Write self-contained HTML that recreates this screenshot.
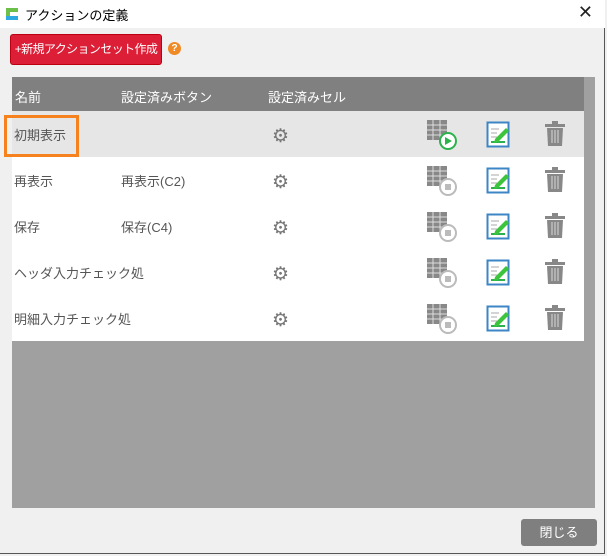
<!DOCTYPE html>
<html><head><meta charset="utf-8"><style>
*{margin:0;padding:0;box-sizing:border-box}
body{width:607px;height:556px;background:#f0f0f0;font-family:"Liberation Sans","Noto Sans CJK JP",sans-serif;position:relative;overflow:hidden}
.win{position:absolute;left:0;top:0;width:605px;height:554px;border-right:1px solid #555;border-bottom:1px solid #555}
.title{position:absolute;left:0;top:0;width:605px;height:28px;background:#fff;font-size:13px;color:#000}
.title span{position:absolute;left:25px;top:5px}
.x{position:absolute;right:12px;top:2px;font-size:18px;color:#222}
.newbtn{position:absolute;left:10px;top:34px;width:152px;height:31px;background:#dc1f37;border:1px solid #b01;border-radius:3px;color:#fff;font-size:12px;letter-spacing:-0.6px;line-height:29px;text-align:center;white-space:nowrap}
.help{position:absolute;left:168px;top:42px;width:13px;height:13px;border-radius:50%;background:#f08a24;color:#fff;font-size:10px;font-weight:bold;text-align:center;line-height:13px}
.panel{position:absolute;left:12px;top:77px;width:583px;height:431px;background:#a0a0a0}
.hdr{position:absolute;left:0;top:0;width:572px;height:34px;background:#808080;color:#fff;font-size:13px}
.hdr span{position:absolute;top:10px}
.row{position:absolute;left:0;width:572px;height:46px;background:#fff;font-size:13px;color:#555}
.row span{position:absolute;top:14px}
.gear{position:absolute;left:260px;top:12px;font-size:19px;color:#777}
.ic{position:absolute;top:8px}
.close{position:absolute;left:521px;top:519px;width:76px;height:27px;background:#7f7f7f;border-radius:3px;color:#fff;font-size:13px;text-align:center;line-height:27px}
.sel{position:absolute;left:4px;top:115px;width:75px;height:42px;border:3px solid #f5821f;z-index:5}
</style></head><body>
<div class="win">
<div class="title">
<svg style="position:absolute;left:5px;top:7px" width="14" height="14"><path d="M1 1h12v4H5v4h8v4H1z" fill="#2da8e0"/><path d="M1 1h12v4H5v4H1z" fill="#6cc04a"/><path d="M1 9h4v4H1z" fill="#2da8e0"/></svg>
<span>アクションの定義</span><div class="x">✕</div></div>
<div class="newbtn">+新規アクションセット作成</div>
<div class="help">?</div>
<div class="panel">
<div class="hdr"><span style="left:3px">名前</span><span style="left:109px">設定済みボタン</span><span style="left:256px">設定済みセル</span></div>
</div>
</div>
<div id="rows" style="position:absolute;left:12px;top:111px">
<div class="row" style="top:0;background:#e6e6e6"><span style="left:2px">初期表示</span><span class="gear">⚙</span>
<svg class="ic" style="left:415px" width="30" height="32"><rect x="0" y="1" width="20" height="20" fill="#888"/><path d="M0 6h20M0 11h20M0 16h20M6 1v20M13 1v20" stroke="#ddd"/><circle cx="21" cy="22" r="8" fill="#fff" stroke="#2bb24c" stroke-width="2"/><path d="M18 18l7 4-7 4z" fill="#2bb24c"/></svg>
<svg class="ic" style="left:474px" width="26" height="30"><rect x="1.5" y="3.5" width="21" height="24" fill="#fff" stroke="#3d86c6" stroke-width="2"/><path d="M5 10h8M5 14h6M5 18h6" stroke="#aaa"/><path d="M5 23h14" stroke="#2bb24c" stroke-width="2"/><path d="M9 20l11-11 3 3-11 11-4 1z" fill="#3cc43c"/></svg>
<svg class="ic" style="left:532px" width="22" height="28"><path d="M1 5h20v3H1zM8 2h6v3H8z" fill="#888"/><path d="M3 9h16l-1 18H4z" fill="#888"/><path d="M8 11v13M11 11v13M14 11v13" stroke="#ccc" stroke-width="1.2"/></svg></div>
</div>
<div class="sel"></div>
<div class="close">閉じる</div>
<script>
var d=[["再表示","再表示(C2)"],["保存","保存(C4)"],["ヘッダ入力チェック処",""],["明細入力チェック処",""]];
var h="";d.forEach(function(r,i){h+='<div class="row" style="top:'+(46*(i+1))+'px"><span style="left:2px">'+r[0]+'</span><span style="left:109px">'+r[1]+'</span><span class="gear">⚙</span>'+
'<svg class="ic" style="left:415px" width="30" height="32"><rect x="0" y="1" width="20" height="20" fill="#888"/><path d="M0 6h20M0 11h20M0 16h20M6 1v20M13 1v20" stroke="#ddd"/><circle cx="21" cy="22" r="8" fill="#fff" stroke="#bbb" stroke-width="2"/><rect x="18" y="19" width="6" height="6" fill="#bbb"/></svg>'+
'<svg class="ic" style="left:474px" width="26" height="30"><rect x="1.5" y="3.5" width="21" height="24" fill="#fff" stroke="#3d86c6" stroke-width="2"/><path d="M5 10h8M5 14h6M5 18h6" stroke="#aaa"/><path d="M5 23h14" stroke="#2bb24c" stroke-width="2"/><path d="M9 20l11-11 3 3-11 11-4 1z" fill="#3cc43c"/></svg>'+
'<svg class="ic" style="left:532px" width="22" height="28"><path d="M1 5h20v3H1zM8 2h6v3H8z" fill="#888"/><path d="M3 9h16l-1 18H4z" fill="#888"/><path d="M8 11v13M11 11v13M14 11v13" stroke="#ccc" stroke-width="1.2"/></svg></div>';});
document.getElementById("rows").innerHTML+=h;
</script>
</body></html>
